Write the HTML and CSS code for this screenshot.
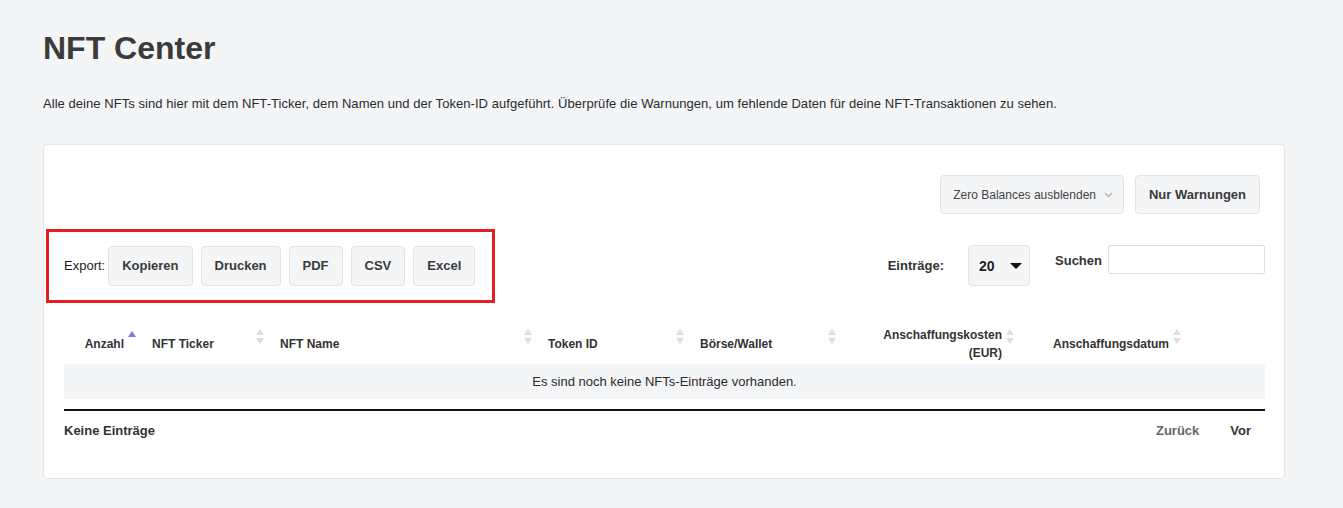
FILE: index.html
```html
<!DOCTYPE html>
<html lang="de">

<head>
  <meta charset="UTF-8">
  <meta name="viewport" content="width=device-width, initial-scale=1.0">
  <title>NFT Center</title>
  <link rel="stylesheet" href="styles.css">
</head>

<body>
  <div class="page">
    <h1 class="title">NFT Center</h1>
    <p class="intro">Alle deine NFTs sind hier mit dem NFT-Ticker, dem Namen und der Token-ID aufgeführt. Überprüfe die Warnungen, um fehlende Daten für deine NFT-Transaktionen zu sehen.</p>

    <div class="card">
      <div class="filters">
        <div class="select-box">
          <span>Zero Balances ausblenden</span>
          <svg class="chev" width="9" height="6" viewBox="0 0 9 6"><path d="M1 1l3.5 3.5L8 1" fill="none" stroke="#b5b5b5" stroke-width="1.4"/></svg>
        </div>
        <button class="btn">Nur Warnungen</button>
      </div>

      <div class="toolbar">
        <div class="export">
          <span class="export-label">Export:</span>
          <button class="btn">Kopieren</button>
          <button class="btn">Drucken</button>
          <button class="btn">PDF</button>
          <button class="btn">CSV</button>
          <button class="btn">Excel</button>
        </div>
        <div class="table-tools">
          <span class="tool-label">Einträge:</span>
          <div class="length-select">
            <span>20</span>
            <span class="caret"></span>
          </div>
          <label class="search">
            <span>Suchen</span>
            <input type="text">
          </label>
        </div>
      </div>

      <table class="nft-table">
        <colgroup>
          <col style="width: 78px">
          <col style="width: 128px">
          <col style="width: 268px">
          <col style="width: 152px">
          <col style="width: 152px">
          <col style="width: 178px">
          <col style="width: 167px">
          <col>
        </colgroup>
        <thead>
          <tr>
            <th class="num sorted">Anzahl</th>
            <th class="sortable">NFT Ticker</th>
            <th class="sortable">NFT Name</th>
            <th class="sortable">Token ID</th>
            <th class="sortable">Börse/Wallet</th>
            <th class="num sortable">Anschaffungskosten (EUR)</th>
            <th class="num sortable">Anschaffungsdatum</th>
            <th></th>
          </tr>
        </thead>
        <tbody>
          <tr>
            <td colspan="8" class="empty">Es sind noch keine NFTs-Einträge vorhanden.</td>
          </tr>
        </tbody>
      </table>

      <div class="table-footer">
        <span class="info">Keine Einträge</span>
        <div class="paging">
          <span class="prev">Zurück</span>
          <span class="next">Vor</span>
        </div>
      </div>
    </div>
  </div>
</body>

</html>
```

FILE: styles.css
```css
* {
  box-sizing: border-box;
}

body {
  margin: 0;
  background-color: #f4f5f7;
  font-family: "Liberation Sans", Arial, sans-serif;
  color: #333;
}

.page {
  padding: 28px 58px 28px 43px;
}

.title {
  margin: 0;
  font-size: 32px;
  line-height: 40px;
  font-weight: bold;
  color: #3b3b3b;
}

.intro {
  margin: 27px 0 0;
  font-size: 13px;
  letter-spacing: 0.05px;
  line-height: 18px;
  color: #2b2b2b;
}

.card {
  margin-top: 31px;
  background-color: #fff;
  border: 1px solid #e4e6e9;
  border-radius: 4px;
  padding: 30px 19px 38px 20px;
}

.btn {
  font-family: inherit;
  font-size: 13px;
  font-weight: bold;
  color: #3a3a3a;
  background-color: #f4f5f7;
  border: 1px solid #e1e3e6;
  border-radius: 4px;
  padding: 0 13px;
  height: 40px;
}

.filters {
  display: flex;
  justify-content: flex-end;
  gap: 11px;
  padding-right: 5px;
}

.filters .btn {
  height: 39px;
}

.select-box {
  display: flex;
  align-items: center;
  gap: 8px;
  height: 39px;
  padding: 0 10px 0 12px;
  background-color: #f4f5f7;
  border: 1px solid #e1e3e6;
  border-radius: 4px;
  font-size: 12px;
  color: #444;
}

.toolbar {
  display: flex;
  justify-content: space-between;
  margin-top: 31px;
}

.export {
  position: relative;
  display: flex;
  align-items: center;
  gap: 8px;
}

/* red marker box around the export buttons */
.export::after {
  content: '';
  position: absolute;
  left: -18px;
  right: -20px;
  top: -16px;
  bottom: -17px;
  border: 3px solid #e3201f;
  pointer-events: none;
}

.export-label {
  font-size: 13px;
  color: #1e1e1e;
  margin-right: -5px;
}

.table-tools {
  display: flex;
  align-items: flex-start;
}

.tool-label {
  font-size: 13px;
  font-weight: bold;
  line-height: 41px;
  margin-right: 24px;
}

.length-select {
  display: flex;
  align-items: center;
  justify-content: space-between;
  width: 62px;
  height: 41px;
  padding: 0 7px 0 10px;
  background-color: #f4f5f7;
  border: 1px solid #e1e3e6;
  border-radius: 4px;
  font-size: 14px;
  font-weight: bold;
  color: #222;
}

.caret {
  width: 0;
  height: 0;
  border-left: 6px solid transparent;
  border-right: 6px solid transparent;
  border-top: 6px solid #111;
}

.search {
  display: flex;
  align-items: flex-start;
  gap: 6px;
  margin-left: 25px;
  font-size: 13px;
  font-weight: bold;
}

.search span {
  line-height: 32px;
}

.search input {
  width: 157px;
  height: 29px;
  border: 1px solid #dcdee2;
  border-radius: 2px;
  margin: 0;
}

.nft-table {
  width: 100%;
  margin-top: 38px;
  border-collapse: collapse;
  table-layout: fixed;
  font-size: 13px;
}

.nft-table th {
  position: relative;
  height: 39px;
  padding: 2px 18px 2px 10px;
  font-size: 12px;
  font-weight: bold;
  text-align: left;
  line-height: 18px;
  color: #333;
}

.nft-table th.num {
  text-align: right;
}

.nft-table th.sortable::before,
.nft-table th.sortable::after,
.nft-table th.sorted::before {
  content: '';
  position: absolute;
  right: 6px;
  width: 0;
  height: 0;
  border-left: 4px solid transparent;
  border-right: 4px solid transparent;
}

.nft-table th.sortable::before {
  top: 5px;
  border-bottom: 6px solid #dedede;
}

.nft-table th.sortable::after {
  top: 14px;
  border-top: 6px solid #dedede;
}

.nft-table th.sorted::before {
  top: 7px;
  right: 6px;
  border-bottom: 6px solid #7b7be0;
}

.nft-table td.empty {
  height: 35px;
  background-color: #f4f5f7;
  text-align: center;
  color: #2b2b2b;
}

.table-footer {
  display: flex;
  justify-content: space-between;
  align-items: center;
  margin-top: 10px;
  border-top: 2px solid #111;
  padding-top: 11px;
  font-size: 13px;
  font-weight: bold;
  line-height: 18px;
}

.paging {
  display: flex;
  gap: 31px;
  padding-right: 14px;
}

.prev {
  color: #666;
}

.next {
  color: #333;
}
```
